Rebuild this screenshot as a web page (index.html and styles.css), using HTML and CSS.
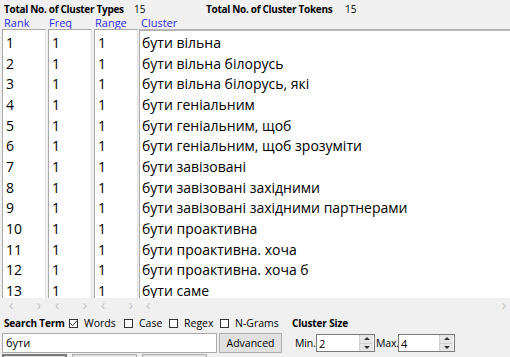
FILE: index.html
```html
<!DOCTYPE html>
<html>
<head>
<meta charset="utf-8">
<link rel="stylesheet" href="styles.css">
</head>
<body>
<div class="app">
  <div class="totals">
    <span class="tlabel tl1">Total No. of Cluster Types</span><span class="tval tv1">15</span>
    <span class="tlabel tl2">Total No. of Cluster Tokens</span><span class="tval tv2">15</span>
  </div>
  <div class="colheads">
    <span class="ch ch-rank">Rank</span>
    <span class="ch ch-freq">Freq</span>
    <span class="ch ch-range">Range</span>
    <span class="ch ch-cluster">Cluster</span>
  </div>
  <div class="lists">
    <div class="col col-rank">
      <div class="box">
        <div class="row">1</div><div class="row">2</div><div class="row">3</div><div class="row">4</div><div class="row">5</div><div class="row">6</div><div class="row">7</div><div class="row">8</div><div class="row">9</div><div class="row">10</div><div class="row">11</div><div class="row">12</div><div class="row">13</div>
      </div>
      <div class="hscroll"><span>&lsaquo;</span><span>&rsaquo;</span></div>
    </div>
    <div class="col col-freq">
      <div class="box">
        <div class="row">1</div><div class="row">1</div><div class="row">1</div><div class="row">1</div><div class="row">1</div><div class="row">1</div><div class="row">1</div><div class="row">1</div><div class="row">1</div><div class="row">1</div><div class="row">1</div><div class="row">1</div><div class="row">1</div>
      </div>
      <div class="hscroll"><span>&lsaquo;</span><span>&rsaquo;</span></div>
    </div>
    <div class="col col-range">
      <div class="box">
        <div class="row">1</div><div class="row">1</div><div class="row">1</div><div class="row">1</div><div class="row">1</div><div class="row">1</div><div class="row">1</div><div class="row">1</div><div class="row">1</div><div class="row">1</div><div class="row">1</div><div class="row">1</div><div class="row">1</div>
      </div>
      <div class="hscroll"><span>&lsaquo;</span><span>&rsaquo;</span></div>
    </div>
    <div class="col col-cluster">
      <div class="box">
        <div class="row">бути вільна</div>
        <div class="row">бути вільна білорусь</div>
        <div class="row">бути вільна білорусь, які</div>
        <div class="row">бути геніальним</div>
        <div class="row">бути геніальним, щоб</div>
        <div class="row">бути геніальним, щоб зрозуміти</div>
        <div class="row">бути завізовані</div>
        <div class="row">бути завізовані західними</div>
        <div class="row">бути завізовані західними партнерами</div>
        <div class="row">бути проактивна</div>
        <div class="row">бути проактивна. хоча</div>
        <div class="row">бути проактивна. хоча б</div>
        <div class="row">бути саме</div>
      </div>
      <div class="hscroll"><span>&lsaquo;</span><span>&rsaquo;</span></div>
    </div>
  </div>
  <div class="opts">
    <span class="blabel st">Search Term</span>
    <label class="cb cb-words"><span class="box-cb"><svg width="9" height="9" viewBox="0 0 9 9"><path d="M1.3 4.4 L3.5 6.7 L7.8 1.9" fill="none" stroke="#333" stroke-width="1"/></svg></span>Words</label>
    <label class="cb cb-case"><span class="box-cb"></span>Case</label>
    <label class="cb cb-regex"><span class="box-cb"></span>Regex</label>
    <label class="cb cb-ngrams"><span class="box-cb"></span>N-Grams</label>
    <span class="blabel cs">Cluster Size</span>
  </div>
  <div class="inputs">
    <div class="search">бути</div>
    <div class="btn adv">Advanced</div>
    <span class="lbl lmin">Min.</span>
    <div class="spin s1"><span class="sval">2</span><span class="arrows"><i class="up"></i><i class="dn"></i></span></div>
    <span class="lbl lmax">Max.</span>
    <div class="spin s2"><span class="sval">4</span><span class="arrows"><i class="up"></i><i class="dn"></i></span></div>
  </div>
  <div class="bottom">
    <div class="bbtn first"></div>
    <div class="bbtn"></div>
    <div class="bbtn"></div>
  </div>
</div>
</body>
</html>
```

FILE: styles.css
```css
* { box-sizing: border-box; }
html, body { margin: 0; padding: 0; }
body {
  width: 510px;
  height: 357px;
  overflow: hidden;
  background: #f0f0f0;
  font-family: "Open Sans", "Noto Sans", sans-serif;
  color: #000;
}
.app { display: flex; flex-direction: column; height: 357px; overflow: hidden; }

.totals {
  height: 17px;
  display: flex;
  align-items: center;
  padding-left: 4px;
  font-size: 10px;
  padding-top: 1px;
  white-space: nowrap;
}
.tlabel { font-weight: 700; letter-spacing: -0.3px; }
.tl1 { width: 130px; }
.tv1 { width: 72px; }
.tl2 { width: 139px; }

.colheads {
  height: 12px;
  font-size: 11px;
  color: #2d2de6;
  line-height: 12px;
  display: flex;
}
.ch-rank { margin-left: 4px; width: 45px; }
.ch-freq { width: 46px; }
.ch-range { width: 46px; }

.lists {
  display: flex;
  height: 283px;
  flex: none;
}
.col { display: flex; flex-direction: column; }
.col-rank { margin-left: 2px; width: 44px; }
.col-freq { margin-left: 2px; width: 44px; }
.col-range { margin-left: 2px; width: 44px; }
.col-cluster { margin-left: 1px; flex: 1; }

.box {
  flex: 1;
  background: #fff;
  border-top: 1px solid #a9a9a9;
  border-left: 1px solid #a9a9a9;
  border-right: 1px solid #e2e2e2;
  overflow: hidden;
  padding-top: 3px;
  font-size: 14px;
  padding-left: 3px;
}
.col-cluster .box { border-right: none; padding-left: 2px; border-top: 2px solid #b4b4b4; padding-top: 2px; }
.row { height: 20.67px; line-height: 20.67px; white-space: nowrap; }

.hscroll {
  height: 14px;
  flex: none;
  display: flex;
  justify-content: space-between;
  align-items: center;
  padding: 0 5px 0 7px;
  color: #c4c4c4;
  font-size: 14px;
  line-height: 14px;
}
.col-cluster .hscroll { padding-right: 4px; }

.opts {
  display: flex;
  align-items: center;
  height: 21px;
  flex: none;
  padding-left: 4px;
  font-size: 10.5px;
  padding-top: 1px;
  white-space: nowrap;
}
.blabel { font-weight: 700; font-size: 10px; letter-spacing: -0.15px; }
.st { width: 65px; }
.cb { display: flex; align-items: center; }
.cb-words { width: 55px; }
.cb-case { width: 45px; }
.cb-regex { width: 51px; }
.cb-ngrams { width: 72px; }
.box-cb {
  width: 9px; height: 9px;
  border: 1px solid #333;
  background: #fff;
  margin-right: 6px;
  display: inline-flex;
  flex: none;
}
.box-cb svg { margin: -1px; flex: none; }

.inputs {
  display: flex;
  align-items: center;
  height: 20px;
  flex: none;
  font-size: 11px;
  white-space: nowrap;
}
.search {
  margin-left: 2px;
  width: 215px;
  height: 20px;
  background: #fff;
  border: 1px solid #a9a9a9;
  padding-left: 3px;
  line-height: 18px;
}
.btn {
  margin-left: 2px;
  width: 63px;
  height: 20px;
  background: #e1e1e1;
  border: 1px solid #adadad;
  display: flex;
  align-items: center;
  justify-content: center;
  font-size: 10.5px;
}
.lbl { font-size: 10.5px; letter-spacing: -0.2px; }
.lmin { margin-left: 13px; width: 21px; }
.lmax { width: 22px; margin-left: 1px; }
.spin {
  height: 18px;
  background: #fff;
  border: 1px solid #7a7a7a;
  display: flex;
  align-items: center;
  justify-content: space-between;
  padding-left: 2px;
  font-size: 11px;
}
.s1 { width: 59px; }
.s2 { width: 57px; }
.arrows {
  width: 14px; height: 16px;
  display: flex; flex-direction: column;
  background: #e6e6e6;
  border-left: 1px solid #d0d0d0;
  margin-right: 1px;
}
.arrows i {
  flex: 1;
  display: flex; align-items: center; justify-content: center;
}
.arrows i.up { border-bottom: 1px solid #cfcfcf; }
.arrows i::after {
  content: "";
  width: 0; height: 0;
  border-left: 3px solid transparent;
  border-right: 3px solid transparent;
}
.arrows i.up::after { border-bottom: 3px solid #333; }
.arrows i.dn::after { border-top: 3px solid #333; }

.bottom {
  display: flex;
  gap: 5px;
  padding-left: 2px;
  margin-top: 1px;
  height: 3px;
  overflow: hidden;
  flex: none;
}
.bbtn {
  width: 65px;
  height: 20px;
  background: #e1e1e1;
  border: 1px solid #adadad;
  flex: none;
}
.bbtn.first { border: 2px solid #7a7a7a; }
```
